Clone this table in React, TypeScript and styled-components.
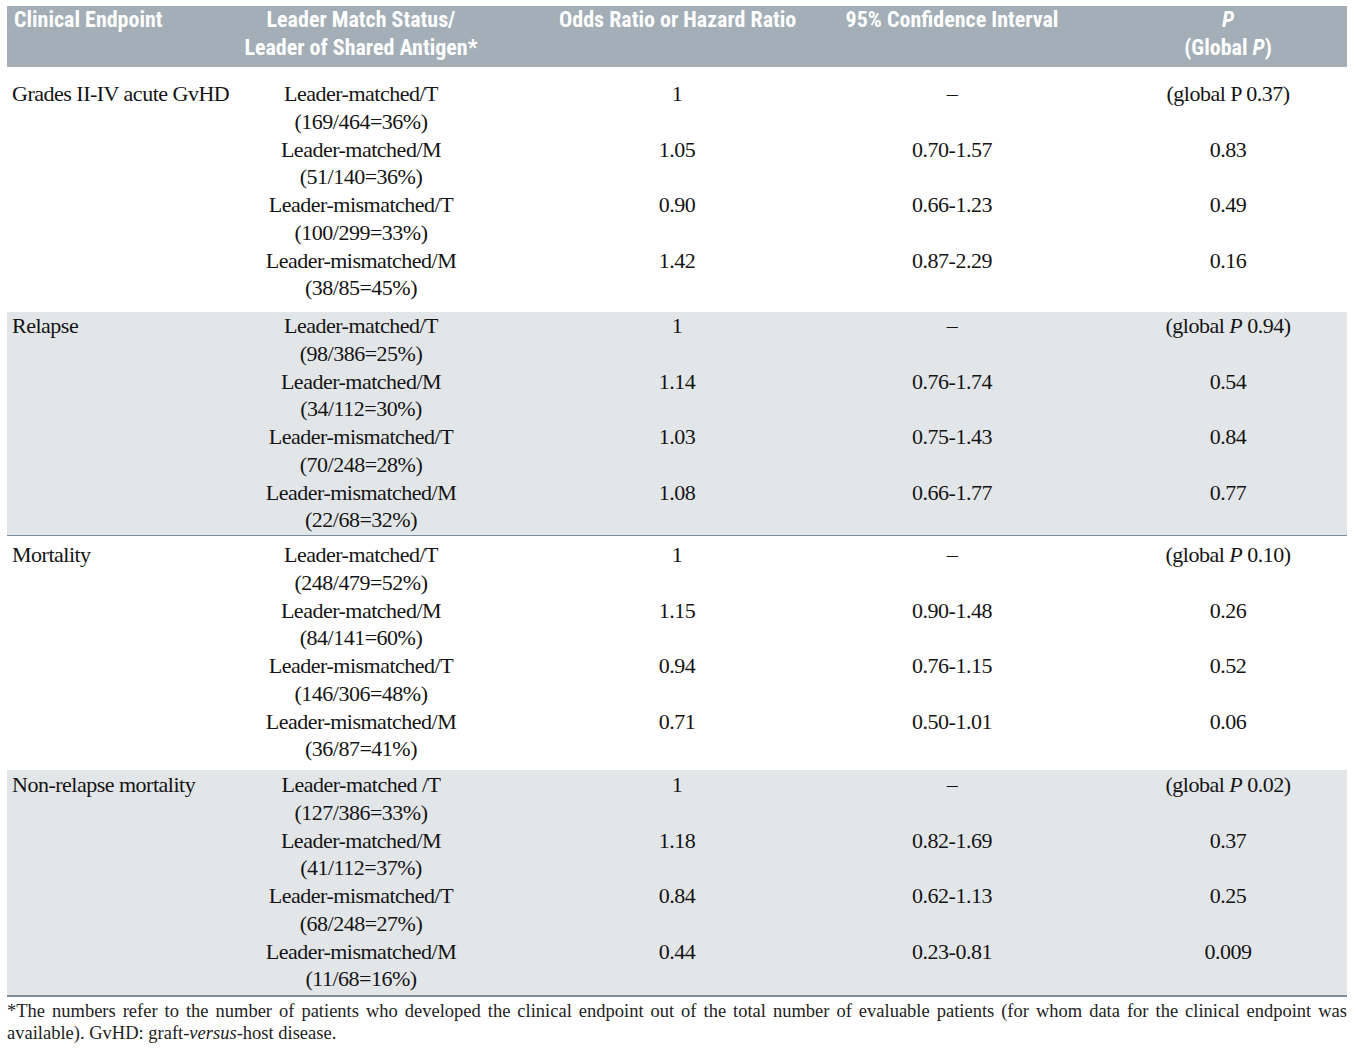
import React from 'react'
import styled, { createGlobalStyle } from 'styled-components'

const GlobalStyle = createGlobalStyle`
  html, body {
    margin: 0;
    padding: 0;
    background: #ffffff;
  }
  body {
    font-family: "Liberation Serif", "Times New Roman", serif;
    color: #141414;
  }
`

const COLS = '156px 396px 236px 314px 238px'

const Page = styled.div`
  width: 1340px;
  padding: 6px 7px 0 7px;
`

const HeaderRow = styled.div`
  display: grid;
  grid-template-columns: ${COLS};
  background: #a3aeb6;
  padding: 0 0 5px 0;
  font-family: "Liberation Sans Narrow", "Roboto Condensed", "Liberation Sans", Arial, sans-serif;
  font-weight: 700;
  font-size: 22px;
  line-height: 28px;
  color: #ffffff;
`

const HeadCell = styled.div<{ $left?: boolean }>`
  text-align: ${(p) => (p.$left ? 'left' : 'center')};
  padding-left: ${(p) => (p.$left ? '7px' : '0')};
  white-space: nowrap;
`

const Group = styled.div<{ $shaded?: boolean; $top: number; $bottom: number; $rule?: number }>`
  background: ${(p) => (p.$shaded ? '#e3e6e9' : '#ffffff')};
  padding: ${(p) => p.$top}px 0 ${(p) => p.$bottom}px 0;
  border-bottom: ${(p) => (p.$rule ? `${p.$rule}px solid #7d8d99` : 'none')};
`

const SubRow = styled.div`
  display: grid;
  grid-template-columns: ${COLS};
  font-size: 22px;
  letter-spacing: -0.5px;
  line-height: 27.75px;
`

const Cell = styled.div<{ $left?: boolean }>`
  text-align: ${(p) => (p.$left ? 'left' : 'center')};
  padding-left: ${(p) => (p.$left ? '5px' : '0')};
  white-space: nowrap;
`

const Line = styled.div``

const Footnote = styled.p`
  margin: 3px 0 0 0;
  font-size: 18.5px;
  line-height: 22px;
  text-align: justify;
  color: #222;
`

type Row = { status: string; count: string; ratio: string; ci: string; p: React.ReactNode }
type GroupData = { label: string; shaded: boolean; top: number; bottom: number; rule?: number; rows: Row[] }

const gp = (v: string, italic = true) => (
  <>
    (global {italic ? <i>P</i> : 'P'} {v})
  </>
)

const groups: GroupData[] = [
  {
    label: 'Grades II-IV acute GvHD',
    shaded: false,
    top: 13,
    bottom: 10,
    rows: [
      { status: 'Leader-matched/T', count: '(169/464=36%)', ratio: '1', ci: '–', p: gp('0.37', false) },
      { status: 'Leader-matched/M', count: '(51/140=36%)', ratio: '1.05', ci: '0.70-1.57', p: '0.83' },
      { status: 'Leader-mismatched/T', count: '(100/299=33%)', ratio: '0.90', ci: '0.66-1.23', p: '0.49' },
      { status: 'Leader-mismatched/M', count: '(38/85=45%)', ratio: '1.42', ci: '0.87-2.29', p: '0.16' },
    ],
  },
  {
    label: 'Relapse',
    shaded: true,
    top: 0,
    bottom: 1,
    rule: 1,
    rows: [
      { status: 'Leader-matched/T', count: '(98/386=25%)', ratio: '1', ci: '–', p: gp('0.94') },
      { status: 'Leader-matched/M', count: '(34/112=30%)', ratio: '1.14', ci: '0.76-1.74', p: '0.54' },
      { status: 'Leader-mismatched/T', count: '(70/248=28%)', ratio: '1.03', ci: '0.75-1.43', p: '0.84' },
      { status: 'Leader-mismatched/M', count: '(22/68=32%)', ratio: '1.08', ci: '0.66-1.77', p: '0.77' },
    ],
  },
  {
    label: 'Mortality',
    shaded: false,
    top: 5,
    bottom: 7,
    rows: [
      { status: 'Leader-matched/T', count: '(248/479=52%)', ratio: '1', ci: '–', p: gp('0.10') },
      { status: 'Leader-matched/M', count: '(84/141=60%)', ratio: '1.15', ci: '0.90-1.48', p: '0.26' },
      { status: 'Leader-mismatched/T', count: '(146/306=48%)', ratio: '0.94', ci: '0.76-1.15', p: '0.52' },
      { status: 'Leader-mismatched/M', count: '(36/87=41%)', ratio: '0.71', ci: '0.50-1.01', p: '0.06' },
    ],
  },
  {
    label: 'Non-relapse mortality',
    shaded: true,
    top: 1,
    bottom: 2,
    rule: 2,
    rows: [
      { status: 'Leader-matched /T', count: '(127/386=33%)', ratio: '1', ci: '–', p: gp('0.02') },
      { status: 'Leader-matched/M', count: '(41/112=37%)', ratio: '1.18', ci: '0.82-1.69', p: '0.37' },
      { status: 'Leader-mismatched/T', count: '(68/248=27%)', ratio: '0.84', ci: '0.62-1.13', p: '0.25' },
      { status: 'Leader-mismatched/M', count: '(11/68=16%)', ratio: '0.44', ci: '0.23-0.81', p: '0.009' },
    ],
  },
]

const App = () => {
  return (
    <Page>
      <GlobalStyle />
      <HeaderRow>
        <HeadCell $left>Clinical Endpoint</HeadCell>
        <HeadCell>
          <Line>Leader Match Status/</Line>
          <Line>Leader of Shared Antigen*</Line>
        </HeadCell>
        <HeadCell>Odds Ratio or Hazard Ratio</HeadCell>
        <HeadCell>95% Confidence Interval</HeadCell>
        <HeadCell>
          <Line><i>P</i></Line>
          <Line>(Global <i>P</i>)</Line>
        </HeadCell>
      </HeaderRow>

      {groups.map((g) => (
        <Group key={g.label} $shaded={g.shaded} $top={g.top} $bottom={g.bottom} $rule={g.rule}>
          {g.rows.map((r, i) => (
            <SubRow key={i}>
              <Cell $left>{i === 0 ? g.label : ''}</Cell>
              <Cell>
                <Line>{r.status}</Line>
                <Line>{r.count}</Line>
              </Cell>
              <Cell>{r.ratio}</Cell>
              <Cell>{r.ci}</Cell>
              <Cell>{r.p}</Cell>
            </SubRow>
          ))}
        </Group>
      ))}

      <Footnote>
        *The numbers refer to the number of patients who developed the clinical endpoint out of the total number of
        evaluable patients (for whom data for the clinical endpoint was available). GvHD: graft-<i>versus</i>-host
        disease.
      </Footnote>
    </Page>
  )
}

export default App
